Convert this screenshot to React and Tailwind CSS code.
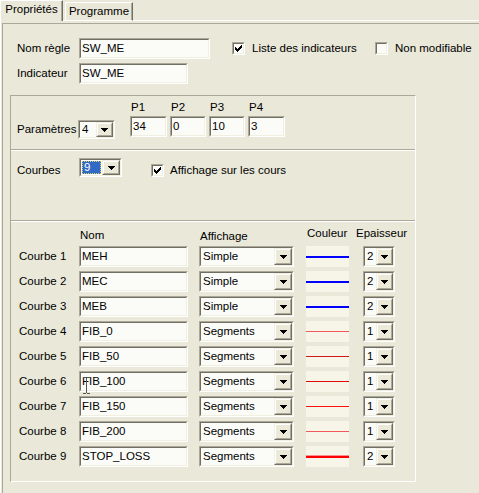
import React from "react";

const Sunken = ({ className = "", innerClassName = "", children }) => (
  <div className={"border border-t-[#aca899] border-l-[#aca899] border-b-white border-r-white " + className}>
    <div className={"h-full w-full border border-t-[#716f64] border-l-[#716f64] border-b-[#f1efe2] border-r-[#f1efe2] " + innerClassName}>
      {children}
    </div>
  </div>
);

const Arrow = () => (
  <svg width="7" height="4" viewBox="0 0 7 4" shapeRendering="crispEdges">
    <rect x="0" y="0" width="7" height="1" fill="#000" />
    <rect x="1" y="1" width="5" height="1" fill="#000" />
    <rect x="2" y="2" width="3" height="1" fill="#000" />
    <rect x="3" y="3" width="1" height="1" fill="#000" />
  </svg>
);

const DropButton = ({ w = "w-[17px]" }) => (
  <div className={"h-full shrink-0 border border-t-[#f1efe2] border-l-[#f1efe2] border-b-[#716f64] border-r-[#716f64] " + w}>
    <div className="flex h-full w-full items-center justify-center border border-t-white border-l-white border-b-[#aca899] border-r-[#aca899] bg-[#ece9d8]">
      <Arrow />
    </div>
  </div>
);

const TextInput = ({ className, value }) => (
  <Sunken className={className} innerClassName="flex items-center bg-[#fbfbf8] pl-[1px] leading-[13px]">
    <span>{value}</span>
  </Sunken>
);

const Combo = ({ className, value, btn = "w-[17px]", pad = "pl-[2px]" }) => (
  <Sunken className={className} innerClassName="flex bg-[#fbfbf8]">
    <div className={"flex flex-1 items-center leading-[13px] " + pad}>{value}</div>
    <DropButton w={btn} />
  </Sunken>
);

const Check = () => (
  <svg width="7" height="7" viewBox="0 0 7 7" shapeRendering="crispEdges">
    <rect x="6" y="0" width="1" height="1" fill="#000" />
    <rect x="5" y="1" width="2" height="1" fill="#000" />
    <rect x="0" y="2" width="1" height="1" fill="#000" />
    <rect x="4" y="2" width="3" height="1" fill="#000" />
    <rect x="0" y="3" width="2" height="1" fill="#000" />
    <rect x="3" y="3" width="3" height="1" fill="#000" />
    <rect x="0" y="4" width="5" height="1" fill="#000" />
    <rect x="1" y="5" width="3" height="1" fill="#000" />
    <rect x="2" y="6" width="1" height="1" fill="#000" />
  </svg>
);

const Checkbox = ({ checked, className = "" }) => (
  <Sunken className={"h-[13px] w-[13px] shrink-0 " + className} innerClassName="flex items-center justify-center bg-[#fbfbf8]">
    {checked ? <Check /> : null}
  </Sunken>
);

const rows = [
  { n: "Courbe 1", name: "MEH", aff: "Simple", ep: "2", line: "h-[2px] bg-[#0000ff]" },
  { n: "Courbe 2", name: "MEC", aff: "Simple", ep: "2", line: "h-[2px] bg-[#0000ff]" },
  { n: "Courbe 3", name: "MEB", aff: "Simple", ep: "2", line: "h-[2px] bg-[#0000ff]" },
  { n: "Courbe 4", name: "FIB_0", aff: "Segments", ep: "1", line: "h-px bg-[#f05a5a]" },
  { n: "Courbe 5", name: "FIB_50", aff: "Segments", ep: "1", line: "h-px bg-[#d01818]" },
  { n: "Courbe 6", name: "FIB_100", aff: "Segments", ep: "1", line: "h-px bg-[#e00808]" },
  { n: "Courbe 7", name: "FIB_150", aff: "Segments", ep: "1", line: "h-px bg-[#ff1010]" },
  { n: "Courbe 8", name: "FIB_200", aff: "Segments", ep: "1", line: "h-px bg-[#f05a5a]" },
  { n: "Courbe 9", name: "STOP_LOSS", aff: "Segments", ep: "2", line: "h-[3px] bg-[#ff0000] border-t border-t-[#f89090]" },
];

const params = [
  { p: "P1", v: "34", w: "w-[37px]" },
  { p: "P2", v: "0", w: "w-[36px]" },
  { p: "P3", v: "10", w: "w-[36px]" },
  { p: "P4", v: "3", w: "w-[37px]" },
];

export default function App() {
  return (
    <div className="relative flex h-[493px] w-[479px] flex-col overflow-hidden bg-[#e9e8d9] font-['Liberation_Sans',Arial,sans-serif] text-[11.5px] text-black">
      {/* Tabs */}
      <div className="flex h-[21px] shrink-0 items-end">
        <div className="relative z-10 flex h-[21px] w-[63px] justify-center border-l border-t border-r border-l-white border-t-white border-r-[#716f64] pt-[2px] leading-[13px] shadow-[inset_-1px_0_0_#aca899]">
          Propriétés
        </div>
        <div className="h-px w-[2px] bg-white" />
        <div className="flex h-[19px] w-[68px] justify-center border border-l-white border-t-white border-b-white border-r-[#716f64] pt-[2px] leading-[13px] shadow-[inset_-1px_0_0_#aca899]">
          Programme
        </div>
        <div className="h-px flex-1 bg-white" />
      </div>

      {/* Panel */}
      <div className="flex-1 border-l border-white pl-[1px] pt-[2px]">
        <div className="h-full border-l border-t border-[#aca899] pl-[7px] pt-[14px]">
          <div className="flex h-[21px] items-center pl-[7px]">
            <div className="w-[62px] leading-[13px]">Nom règle</div>
            <TextInput className="h-[21px] w-[131px]" value="SW_ME" />
            <div className="ml-[22px] flex w-[143px] items-center">
              <Checkbox checked />
              <span className="ml-[7px] leading-[13px]">Liste des indicateurs</span>
            </div>
            <Checkbox />
            <span className="ml-[7px] leading-[13px]">Non modifiable</span>
          </div>
          <div className="mt-[4px] flex h-[21px] items-center pl-[7px]">
            <div className="w-[62px] leading-[13px]">Indicateur</div>
            <TextInput className="h-[21px] w-[109px]" value="SW_ME" />
          </div>

          {/* Group box */}
          <div className="mt-[11px] flex h-[387px] w-[406px] flex-col border border-t-[#aca899] border-l-[#aca899] border-b-white border-r-white">
            {/* Paramètres */}
            <div className="flex h-[53px] items-start pl-[6px] pt-[5px]">
              <div className="mt-[22px] w-[61px] leading-[13px]">Paramètres</div>
              <Combo className="mt-[19px] h-[19px] w-[37px]" value="4" />
              <div className="ml-[15px] flex gap-[3px]">
                {params.map((x) => (
                  <div key={x.p} className={"flex flex-col " + x.w}>
                    <div className="h-[13px] pl-[1px] leading-[13px]">{x.p}</div>
                    <TextInput className="mt-[2px] h-[21px] w-full" value={x.v} />
                  </div>
                ))}
              </div>
            </div>
            <div className="h-px bg-[#aca899]" />
            <div className="h-px bg-white" />

            {/* Courbes */}
            <div className="flex h-[69px] items-start pl-[6px] pt-[7px]">
              <div className="mt-[6px] w-[62px] leading-[13px]">Courbes</div>
              <Sunken className="h-[19px] w-[43px]" innerClassName="flex bg-[#fbfbf8]">
                <div className="flex flex-1 p-[1px]">
                  <div className="flex w-full items-center border border-dotted border-[#d8d070] bg-[#316ac5] pl-[1px] leading-[13px] text-white">
                    9
                  </div>
                </div>
                <DropButton w="w-[18px]" />
              </Sunken>
              <Checkbox checked className="ml-[29px] mt-[6px]" />
              <span className="ml-[6px] mt-[6px] leading-[13px]">Affichage sur les cours</span>
            </div>
            <div className="h-px bg-[#aca899]" />
            <div className="h-px bg-white" />

            {/* Table */}
            <div className="flex-1 pl-[8px]">
              <div className="flex h-[24px] items-start">
                <div className="w-[60px]" />
                <div className="mt-[7px] w-[109px] pl-[1px] leading-[13px]">Nom</div>
                <div className="ml-[11px] mt-[8px] w-[95px] pl-[1px] leading-[13px]">Affichage</div>
                <div className="ml-[12px] mt-[5px] w-[43px] pl-[1px] leading-[13px]">Couleur</div>
                <div className="ml-[7px] mt-[5px] leading-[13px]">Epaisseur</div>
              </div>
              <div className="flex flex-col gap-[4px]">
                {rows.map((r) => (
                  <div key={r.n} className="flex h-[21px] items-center">
                    <div className="w-[60px] leading-[13px]">{r.n}</div>
                    <TextInput className="h-[21px] w-[109px]" value={r.name} />
                    <Combo className="ml-[11px] h-[21px] w-[95px]" value={r.aff} btn="w-[18px]" pad="pl-[2px]" />
                    <div className="ml-[12px] flex h-[21px] w-[43px] flex-col justify-center bg-[#f6f5e7]">
                      <div className={"w-full " + r.line} />
                    </div>
                    <Combo className="ml-[14px] h-[21px] w-[32px]" value={r.ep} btn="w-[17px]" pad="pl-[2px]" />
                  </div>
                ))}
              </div>
            </div>
          </div>
        </div>
      </div>

      {/* mouse I-beam cursor */}
      <svg className="absolute left-[83px] top-[377px]" width="7" height="17" viewBox="0 0 7 17" shapeRendering="crispEdges">
        <rect x="0" y="0" width="3" height="1" fill="#555" />
        <rect x="4" y="0" width="3" height="1" fill="#555" />
        <rect x="3" y="1" width="1" height="15" fill="#555" />
        <rect x="0" y="16" width="3" height="1" fill="#555" />
        <rect x="4" y="16" width="3" height="1" fill="#555" />
      </svg>
    </div>
  );
}
